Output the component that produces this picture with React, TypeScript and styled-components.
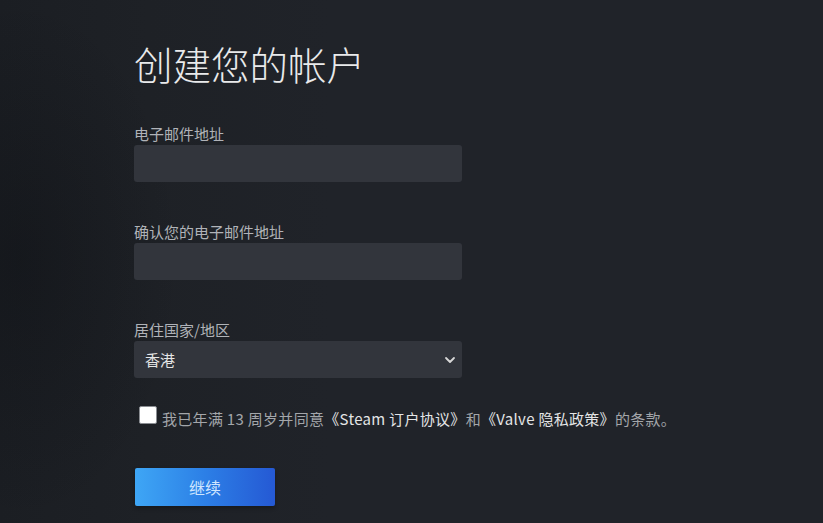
import React from "react";
import styled, { createGlobalStyle } from "styled-components";

const GlobalStyle = createGlobalStyle`
  html, body {
    margin: 0;
    padding: 0;
    background: #202329;
  }
  * {
    box-sizing: border-box;
  }
`;

const Page = styled.div`
  width: 823px;
  height: 523px;
  overflow: hidden;
  background:
    radial-gradient(ellipse 160px 260px at 20px 260px, rgba(10, 12, 16, 0.35), transparent),
    linear-gradient(90deg, #1b1e23 0%, #1e2126 18%, #202329 40%, #202329 100%);
  font-family: "Noto Sans CJK SC", "Noto Sans", sans-serif;
  padding: 40px 0 0 134px;
`;

const Title = styled.h1`
  margin: 0 0 38px;
  font-size: 38.5px;
  line-height: 46px;
  font-weight: 300;
  color: #e9eaeb;
  letter-spacing: 0;
`;

const Field = styled.div`
  display: flex;
  flex-direction: column;
  width: 328px;
  margin-bottom: 40px;
`;

const Label = styled.label`
  font-size: 15px;
  line-height: 20px;
  color: #b0b3b8;
  margin-bottom: 1px;
`;

const Input = styled.input`
  height: 37px;
  border: none;
  border-radius: 3px;
  background: #32353c;
  outline: none;
  padding: 0 11px;
  color: #e0e0e0;
  font-size: 15px;
  font-family: inherit;
`;

const SelectBox = styled.div`
  height: 37px;
  border-radius: 3px;
  background: #32353c;
  display: flex;
  align-items: center;
  justify-content: space-between;
  padding: 0 5px 0 11px;
  color: #e6e6e6;
  font-size: 15px;
`;

const AgreeRow = styled.div`
  display: flex;
  align-items: center;
  gap: 5px;
  margin: -15px 0 0 5px;
  height: 30px;
`;

const Check = styled.span`
  width: 18px;
  height: 18px;
  border-radius: 2px;
  background: #ffffff;
  border: 1px solid #8a8d92;
  margin-top: -6px;
  flex-shrink: 0;
`;

const AgreeText = styled.span`
  font-size: 15px;
  letter-spacing: 0.3px;
  color: #a3a6aa;
  white-space: nowrap;
`;

const Link = styled.span`
  color: #e4e5e6;
`;

const Button = styled.button`
  margin: 35px 0 0 1px;
  width: 140px;
  height: 38px;
  border: none;
  border-radius: 2px;
  background: linear-gradient(90deg, #3ea6f5 0%, #2c7fe6 50%, #2559d4 100%);
  color: #cfe6ff;
  font-size: 16px;
  font-family: inherit;
  box-shadow: 0 2px 4px rgba(0, 0, 0, 0.3);
  cursor: pointer;
`;

const Chevron = () => (
  <svg width="14" height="14" viewBox="0 0 14 14" fill="none">
    <path d="M3 5l4 4 4-4" stroke="#d8d8d8" strokeWidth="1.8" strokeLinecap="round" strokeLinejoin="round" />
  </svg>
);

const App = () => {
  return (
    <>
      <GlobalStyle />
      <Page>
        <Title>创建您的帐户</Title>
        <Field>
          <Label>电子邮件地址</Label>
          <Input type="text" />
        </Field>
        <Field>
          <Label>确认您的电子邮件地址</Label>
          <Input type="text" />
        </Field>
        <Field>
          <Label>居住国家/地区</Label>
          <SelectBox>
            <span>香港</span>
            <Chevron />
          </SelectBox>
        </Field>
        <AgreeRow>
          <Check />
          <AgreeText>
            我已年满 13 周岁并同意<Link>《Steam 订户协议》</Link>和<Link>《Valve 隐私政策》</Link>的条款。
          </AgreeText>
        </AgreeRow>
        <Button>继续</Button>
      </Page>
    </>
  );
};

export default App;
